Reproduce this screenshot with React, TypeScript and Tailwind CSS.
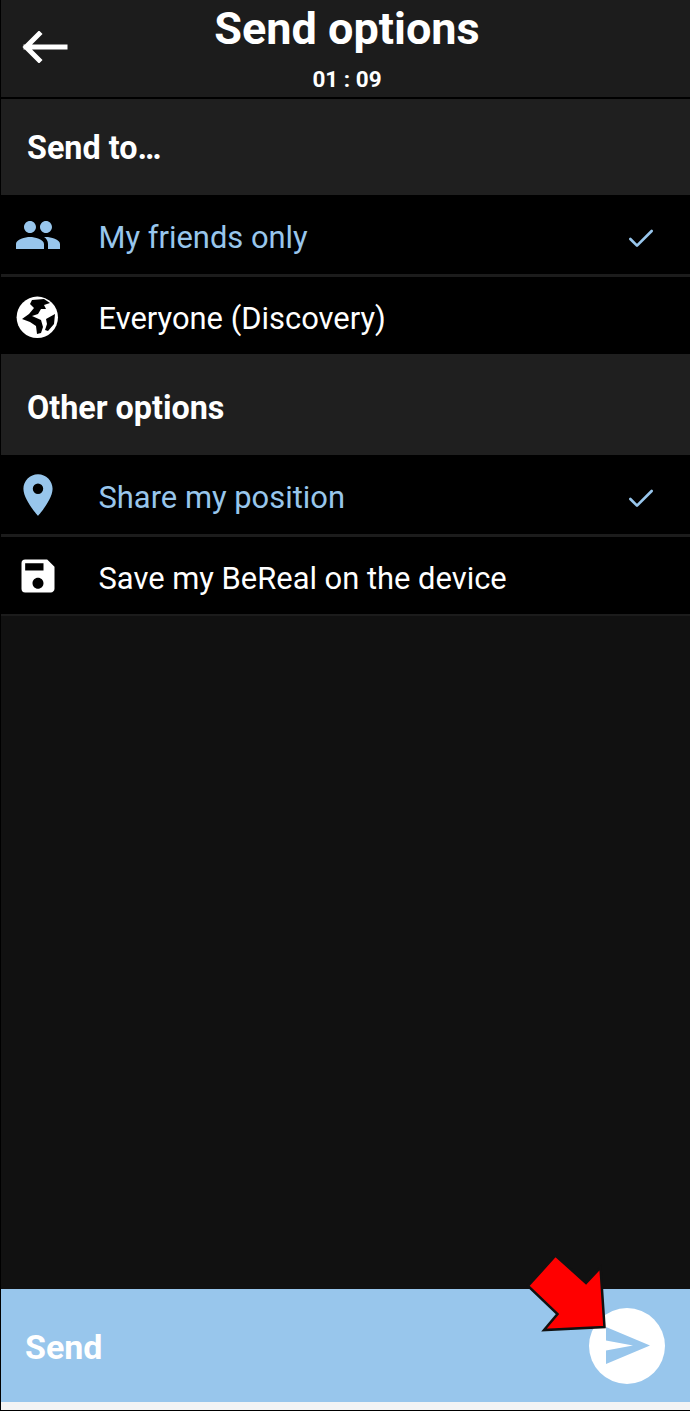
import { Check } from "lucide-react";
import { MdPeople, MdPlace, MdSave } from "react-icons/md";
import type { ReactNode } from "react";

function GlobeIcon() {
  return (
    <svg viewBox="0 0 60 56" className="mt-[3px] h-[56px] w-[60px] shrink-0">
      <circle cx="29.3" cy="28.3" r="20.7" fill="#fff" />
      <path
        d="M24 11L36 10L42 14L36 16L38 20L33 20L30 25L24 27L33 31L35 38L33 44L29 45L28 37L22 33L14 30L21 25L26 19L22 15Z"
        fill="#000"
      />
      <path d="M38 30L47 25L46 35L40 42L37 41L39 35Z" fill="#000" />
    </svg>
  );
}

function SectionHeader({ label, className }: { label: string; className: string }) {
  return (
    <div className={`flex items-center bg-[#1f1f1f] pl-[26px] ${className}`}>
      <span className="text-[32.3px] font-bold leading-none text-white">{label}</span>
    </div>
  );
}

interface OptionRowProps {
  icon: ReactNode;
  label: string;
  active?: boolean;
  className: string;
}

function OptionRow({ icon, label, active, className }: OptionRowProps) {
  return (
    <div className={`flex items-center bg-black ${className}`}>
      <div className="flex w-[74px] shrink-0 items-center justify-center">{icon}</div>
      <span
        className={`flex-1 pl-[23.5px] pt-[7px] text-[30.9px] leading-none ${active ? "text-[#98c6ec]" : "text-white"}`}
      >
        {label}
      </span>
      {active && (
        <Check className="mr-[33px] mt-2 h-[32px] w-[32px] text-[#98c6ec]" strokeWidth={2} />
      )}
    </div>
  );
}

export default function App() {
  return (
    <div className="relative flex h-[1411px] w-[690px] flex-col overflow-hidden bg-black pb-px pl-px font-['Roboto',sans-serif]">
      {/* header */}
      <div className="relative flex h-[97px] shrink-0 flex-col items-center bg-[#1c1c1c] pl-[3px] pt-[1px]">
        <svg viewBox="0 0 46 32" className="absolute left-[21px] top-[31px] h-8 w-[46px]" fill="none">
          <path
            d="M43 16H4M17 3L4 16l13 13"
            stroke="#fff"
            strokeWidth="5"
            strokeLinecap="square"
          />
        </svg>
        <span className="mt-[5px] text-[45px] font-bold leading-[46px] text-white">Send options</span>
        <span className="mt-[13px] text-[22.5px] font-bold leading-[28px] text-white">01 : 09</span>
      </div>
      <div className="h-[2px] shrink-0 bg-black" />

      <SectionHeader label="Send to…" className="h-[96px] shrink-0 pt-[3px]" />
      <OptionRow
        active
        label="My friends only"
        className="mt-px h-[78px] shrink-0"
        icon={<MdPeople className="h-[48px] w-[48px] text-[#98c6ec]" />}
      />
      <div className="h-[3px] shrink-0 bg-[#1c1c1c]" />
      <OptionRow
        label="Everyone (Discovery)"
        className="h-[77px] shrink-0"
        icon={<GlobeIcon />}
      />
      <SectionHeader label="Other options" className="h-[101px] shrink-0 pt-[8px]" />
      <OptionRow
        active
        label="Share my position"
        className="h-[79px] shrink-0"
        icon={<MdPlace className="h-[50px] w-[50px] text-[#98c6ec]" />}
      />
      <div className="h-[3px] shrink-0 bg-[#1c1c1c]" />
      <OptionRow
        label="Save my BeReal on the device"
        className="h-[77px] shrink-0"
        icon={<MdSave className="h-[44px] w-[44px] text-white" />}
      />
      <div className="h-[2px] shrink-0 bg-[#1c1c1c]" />

      <div className="flex-1 bg-[#111111]" />

      {/* send bar */}
      <div className="flex h-[113px] shrink-0 items-center justify-between bg-[#98c6ec] pl-6 pr-[25px]">
        <span className="pt-[2px] text-[34px] font-bold leading-none text-white">Send</span>
        <div className="flex h-[76px] w-[76px] items-center justify-center rounded-full bg-white">
          <svg viewBox="0 0 44 38" className="ml-[2px] h-[38px] w-[44px]" fill="#98c6ec">
            <path d="M0 0L44 18.5L0 37V23.5L27 18.5L0 13.5Z" />
          </svg>
        </div>
      </div>
      <div className="h-2 shrink-0 bg-[#f4f4f4]" />

      {/* red arrow callout */}
      <svg
        viewBox="0 0 690 1411"
        className="pointer-events-none absolute left-0 top-0 h-[1411px] w-[690px]"
      >
        <path
          d="M555.5 1255.5L586 1283L600.5 1267.5L604.5 1327L544 1330L557.5 1314L528 1286Z"
          fill="#ff0000"
          stroke="#111"
          strokeWidth="2.5"
        />
      </svg>
    </div>
  );
}
